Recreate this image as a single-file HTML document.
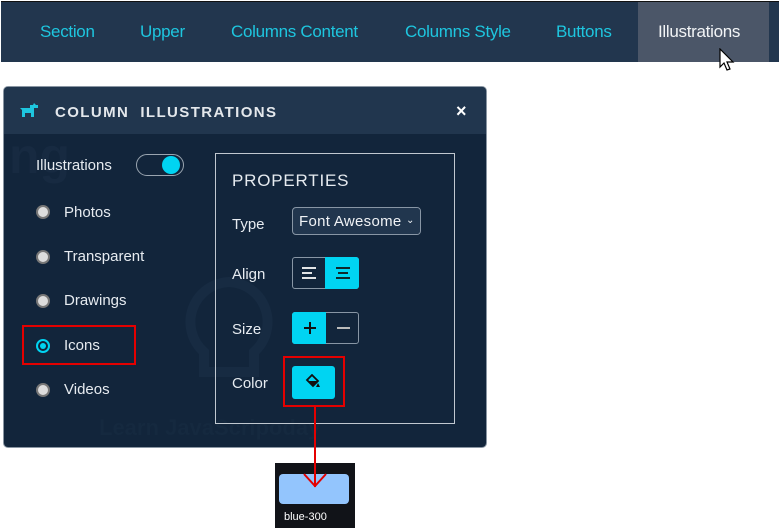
<!DOCTYPE html>
<html><head><style>
body{margin:0;width:780px;height:528px;background:#fff;position:relative;overflow:hidden;font-family:"Liberation Sans",sans-serif}
.a{position:absolute}
.nav{left:1px;top:1px;width:778px;height:60px;background:#22364e;border-top:1px solid #111}
.nav span{position:absolute;top:20px;font-size:17px;color:#1ec6df;letter-spacing:-0.3px}
.panel{left:3px;top:86px;width:482px;height:360px;background:#12253b;border:1px solid #8a96a3;border-radius:5px;overflow:hidden}
.hdr{left:0;top:0;width:482px;height:47px;background:#21364e}
.lbl{color:#e6ebf0;font-size:15px}
.radio{width:10px;height:10px;border-radius:50%;background:#ddd;border:2px solid #777}
.props{left:215px;top:153px;width:238px;height:269px;border:1px solid #c0c8d0}
.btn{position:absolute;border:1px solid #8896a5;border-radius:3px;box-sizing:border-box}
</style></head><body>
<div class="a nav">
<span style="left:39px">Section</span>
<span style="left:139px">Upper</span>
<span style="left:230px">Columns Content</span>
<span style="left:404px">Columns Style</span>
<span style="left:555px">Buttons</span>
<div style="position:absolute;left:637px;top:0;width:131px;height:60px;background:#4b5668"></div>
<span style="left:657px;color:#f2f4f6">Illustrations</span>
</div>
<svg class="a" style="left:719px;top:48px" width="18" height="26" viewBox="0 0 18 26"><path d="M1 1 L1 19 L5 15 L8 22 L11 21 L8 14 L14 14 Z" fill="#fff" stroke="#000" stroke-width="1.2"/></svg>

<div class="a panel">
<div class="a hdr"></div>
<svg class="a" style="left:15px;top:16px" width="20" height="16" viewBox="0 0 20 16"><path d="M1 5h10v-3h3l1-2 2 2h2v3h-4v9h-3v-4h-6v4h-3v-7l-2-2z" fill="#1ec6df"/></svg>
<div class="a" style="left:51px;top:17px;font-size:15px;font-weight:bold;letter-spacing:1.4px;color:#e4e8ec">COLUMN&nbsp; ILLUSTRATIONS</div>
<div class="a" style="left:452px;top:14px;font-size:18px;font-weight:bold;color:#fff">×</div>
<div class="a" style="left:5px;top:40px;font-size:50px;font-weight:bold;color:#172a41">ng</div>
<div class="a" style="left:95px;top:328px;font-size:22px;font-weight:bold;color:#15293f">Learn JavaScripoday</div>
<svg class="a" style="left:180px;top:190px" width="90" height="110" viewBox="0 0 90 110"><path d="M45 5a40 40 0 0 0-25 70v20h50v-20a40 40 0 0 0-25-70z" fill="none" stroke="#172b42" stroke-width="10"/></svg>
<div class="a lbl" style="left:32px;top:70px">Illustrations</div>
<div class="a" style="left:132px;top:67px;width:46px;height:20px;border:1px solid #9aa5b0;border-radius:11px"></div>
<div class="a" style="left:158px;top:69px;width:18px;height:18px;border-radius:50%;background:#00d4f2"></div>
<div class="a radio" style="left:32px;top:118px"></div><div class="a lbl" style="left:60px;top:117px">Photos</div>
<div class="a radio" style="left:32px;top:163px"></div><div class="a lbl" style="left:60px;top:161px">Transparent</div>
<div class="a radio" style="left:32px;top:207px"></div><div class="a lbl" style="left:60px;top:205px">Drawings</div>
<div class="a" style="left:18px;top:238px;width:110px;height:36px;border:2px solid #e40000"></div>
<div class="a" style="left:32px;top:252px;width:10px;height:10px;border-radius:50%;border:2px solid #00d4f2;background:#12253b"></div>
<div class="a" style="left:36px;top:256px;width:6px;height:6px;border-radius:50%;background:#00d4f2"></div>
<div class="a lbl" style="left:60px;top:250px">Icons</div>
<div class="a radio" style="left:32px;top:296px"></div><div class="a lbl" style="left:60px;top:294px">Videos</div>
</div>

<div class="a props">
<div class="a" style="left:16px;top:17px;font-size:17px;color:#e6ebf0;letter-spacing:0.8px">PROPERTIES</div>
<div class="a lbl" style="left:16px;top:62px">Type</div>
<div class="btn" style="left:76px;top:53px;width:129px;height:28px;background:#21364e;border-radius:4px;overflow:hidden;color:#f0f3f6;font-size:15px;padding:5px 0 0 6px;letter-spacing:0.3px;white-space:nowrap">Font Awesome<span style="position:absolute;right:0;top:0;width:14px;height:26px;background:#21364e;font-size:10px;padding-top:7px;box-sizing:border-box">&#8964;</span></div>
<div class="a lbl" style="left:16px;top:112px">Align</div>
<div class="btn" style="left:76px;top:103px;width:67px;height:32px"></div>
<div class="a" style="left:109px;top:103px;width:34px;height:32px;background:#00d4f2;border-radius:0 3px 3px 0"></div>
<svg class="a" style="left:84px;top:111px" width="60" height="16"><path d="M2 3h14M2 8h10M2 13h14" stroke="#fff" stroke-width="1.8"/><path d="M36 3h14M38 8h10M36 13h14" stroke="#111" stroke-width="1.8"/></svg>
<div class="a lbl" style="left:16px;top:167px">Size</div>
<div class="btn" style="left:76px;top:158px;width:67px;height:32px"></div>
<div class="a" style="left:76px;top:158px;width:34px;height:32px;background:#00d4f2;border-radius:3px 0 0 3px"></div>
<svg class="a" style="left:84px;top:166px" width="60" height="16"><path d="M10 2v12M4 8h12" stroke="#111" stroke-width="2"/><path d="M37 8h13" stroke="#bbb" stroke-width="2"/></svg>
<div class="a lbl" style="left:16px;top:221px">Color</div>
<div class="a" style="left:67px;top:202px;width:62px;height:51px;border:2px solid #e40000;box-sizing:border-box"></div>
<div class="a" style="left:76px;top:212px;width:43px;height:33px;background:#00d4f2;border-radius:3px"></div>
<svg class="a" style="left:89px;top:220px" width="18" height="16" viewBox="0 0 18 16"><path d="M7 1l6 6-5 5-6-6z" fill="none" stroke="#111" stroke-width="1.8"/><path d="M2 7h11l-5 5z" fill="#111"/><path d="M13 9l-2 4h4z" fill="#111"/></svg>
</div>

<div class="a" style="left:275px;top:463px;width:80px;height:65px;background:#111318"></div>
<div class="a" style="left:279px;top:474px;width:70px;height:30px;background:#93c5fd;border-radius:4px"></div>
<div class="a" style="left:284px;top:511px;font-size:11px;color:#fff">blue-300</div>
<svg class="a" style="left:290px;top:406px" width="50" height="84"><path d="M25 0V81M14 68l11 12 11-12" stroke="#e40000" stroke-width="2" fill="none"/></svg>
</body></html>
